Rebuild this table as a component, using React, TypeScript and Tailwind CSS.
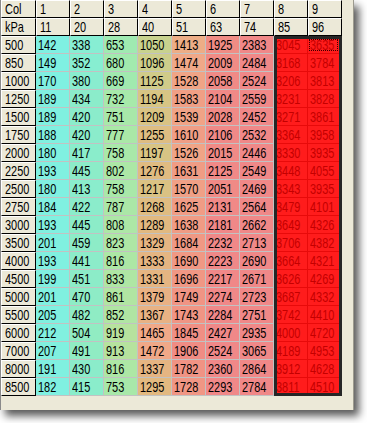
import React from "react";

const kpa = [11, 20, 28, 40, 51, 63, 74, 85, 96];

const rows: [number, number[]][] = [
  [500, [142, 338, 653, 1050, 1413, 1925, 2383, 3045, 3635]],
  [850, [149, 352, 680, 1096, 1474, 2009, 2484, 3168, 3784]],
  [1000, [170, 380, 669, 1125, 1528, 2058, 2524, 3206, 3813]],
  [1250, [189, 434, 732, 1194, 1583, 2104, 2559, 3231, 3828]],
  [1500, [189, 420, 751, 1209, 1539, 2028, 2452, 3271, 3861]],
  [1750, [188, 420, 777, 1255, 1610, 2106, 2532, 3364, 3958]],
  [2000, [180, 417, 758, 1197, 1526, 2015, 2446, 3330, 3935]],
  [2250, [193, 445, 802, 1276, 1631, 2125, 2549, 3448, 4055]],
  [2500, [180, 413, 758, 1217, 1570, 2051, 2469, 3343, 3935]],
  [2750, [184, 422, 787, 1268, 1625, 2131, 2564, 3479, 4101]],
  [3000, [193, 445, 808, 1289, 1638, 2181, 2662, 3649, 4326]],
  [3500, [201, 459, 823, 1329, 1684, 2232, 2713, 3706, 4382]],
  [4000, [193, 441, 816, 1333, 1690, 2223, 2690, 3664, 4321]],
  [4500, [199, 451, 833, 1331, 1696, 2217, 2671, 3626, 4269]],
  [5000, [201, 470, 861, 1379, 1749, 2274, 2723, 3687, 4332]],
  [5500, [205, 482, 852, 1367, 1743, 2284, 2751, 3742, 4410]],
  [6000, [212, 504, 919, 1465, 1845, 2427, 2935, 4000, 4720]],
  [7000, [207, 491, 913, 1472, 1906, 2524, 3065, 4189, 4953]],
  [8000, [191, 430, 816, 1337, 1782, 2360, 2864, 3912, 4628]],
  [8500, [182, 415, 753, 1295, 1728, 2293, 2784, 3811, 4510]],
];

// value -> rgb stops for the heat map
const stops: [number, number, number, number][] = [
  [0, 124, 240, 232],
  [200, 128, 240, 224],
  [450, 140, 236, 200],
  [700, 164, 234, 172],
  [900, 180, 228, 160],
  [1050, 200, 210, 142],
  [1200, 216, 196, 132],
  [1300, 226, 184, 128],
  [1450, 240, 170, 136],
  [1650, 240, 154, 132],
  [1900, 240, 140, 132],
  [2200, 240, 136, 136],
  [99999, 240, 136, 136],
];

function heat(v: number) {
  for (let i = 0; i < stops.length - 1; i++) {
    const a = stops[i];
    const b = stops[i + 1];
    if (v >= a[0] && v <= b[0]) {
      const t = (v - a[0]) / (b[0] - a[0]);
      const c = [1, 2, 3].map((k) => Math.round(a[k] + (b[k] - a[k]) * t));
      return `rgb(${c[0]}, ${c[1]}, ${c[2]})`;
    }
  }
  return "rgb(240, 136, 136)";
}

const fixedCell =
  "bg-[#ECE9D8] border-t border-l border-r border-b border-t-white border-l-white border-r-black border-b-black pl-[3px] leading-[16px] text-black";

// narrow text like the old grid font
function Txt({ children }: { children: React.ReactNode }) {
  return <span className="inline-block origin-left scale-x-[0.73] whitespace-nowrap">{children}</span>;
}

export default function App() {
  return (
    <div className="min-h-screen bg-white">
      <div
        className="w-[354px] h-[410px] bg-[#ECE9D8] border-l border-l-[#8a8a8a] border-r border-r-[#9c9a8e] shadow-[5px_6px_8px_rgba(0,0,0,0.65)]"
        style={{ fontFamily: "'Liberation Sans', Arial, sans-serif" }}
      >
        <div className="relative grid grid-cols-[35px_repeat(9,34px)] auto-rows-[18px] w-max text-[15px]">
          {/* header rows */}
          <div className={fixedCell}>
            <Txt>Col</Txt>
          </div>
          {kpa.map((_, i) => (
            <div key={"c" + i} className={fixedCell}>
              <Txt>{i + 1}</Txt>
            </div>
          ))}
          <div className={fixedCell}>
            <Txt>kPa</Txt>
          </div>
          {kpa.map((k) => (
            <div key={"k" + k} className={fixedCell}>
              <Txt>{k}</Txt>
            </div>
          ))}

          {/* data rows */}
          {rows.map(([rpm, vals], r) => (
            <React.Fragment key={rpm}>
              <div className={fixedCell}>
                <Txt>{rpm}</Txt>
              </div>
              {vals.map((v, c) =>
                c >= 7 ? (
                  <div
                    key={c}
                    className="relative bg-[#FF1C1C] text-[#C40000] border-r border-b border-[#E80A0A] pl-[2px] leading-[17px]"
                  >
                    {r === 0 && c === 8 && (
                      <span className="absolute left-[1px] right-[3px] top-[3px] bottom-[2px] border border-dotted border-[#3a0000]" />
                    )}
                    <Txt>{v}</Txt>
                  </div>
                ) : (
                  <div
                    key={c}
                    className="border-r border-b border-[#C2C2C2] pl-[2px] leading-[17px] text-black"
                    style={{ backgroundColor: heat(v) }}
                  >
                    <Txt>{v}</Txt>
                  </div>
                )
              )}
            </React.Fragment>
          ))}

          {/* selection frame over columns 8-9 */}
          <div className="pointer-events-none absolute inset-0 col-[9/11] row-[3/23] border-[3px] border-[#262626]" />
        </div>
      </div>
    </div>
  );
}
